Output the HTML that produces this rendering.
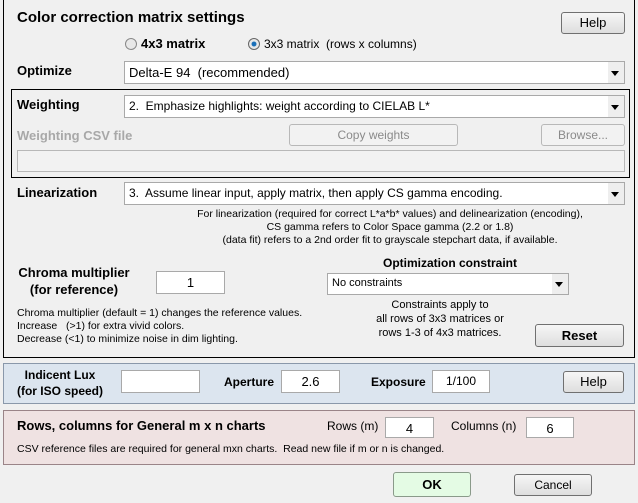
<!DOCTYPE html>
<html><head><style>
*{box-sizing:border-box;margin:0;padding:0}
body{width:638px;height:503px;background:#f0f0f0;font-family:"Liberation Sans",Arial,sans-serif;font-size:12px;color:#000;position:relative;overflow:hidden}
.a{position:absolute;white-space:nowrap}
.b{font-weight:bold}
.btn{position:absolute;border:1px solid #707070;border-radius:3px;background:linear-gradient(#f6f6f6,#dedede);text-align:center;font-size:13px}
.dis{border-color:#b8b8b8;color:#8a8a8a;background:#f2f2f2;font-size:12px}
.sel{position:absolute;background:#fff;border:1px solid #a9a9a9;font-size:12px;padding:3px 4px}
.sel:after{content:"";position:absolute;right:5px;top:50%;margin-top:-2px;border-left:4px solid transparent;border-right:4px solid transparent;border-top:5px solid #000}
.sel i{position:absolute;right:0;top:0;bottom:0;width:16px;background:#eee}
.in{position:absolute;background:#fff;border:1px solid #a9a9a9;text-align:center;font-size:13px}
.c{text-align:center}
.sm{font-size:11px}
</style></head><body>
<div class="a" style="left:3px;top:0;width:632px;height:358px;border:1px solid #000;border-top:none"></div>
<div class="a b" style="left:17px;top:9px;font-size:15px">Color correction matrix settings</div>
<div class="btn" style="left:561px;top:12px;width:64px;height:22px;line-height:20px">Help</div>
<div class="a" style="left:125px;top:38px;width:12px;height:12px;border-radius:50%;border:1px solid #888;background:#e8e8e8"></div>
<div class="a b" style="left:141px;top:36px;font-size:13px">4x3 matrix</div>
<div class="a" style="left:248px;top:38px;width:12px;height:12px;border-radius:50%;border:1px solid #666;background:radial-gradient(#1a6fb8 30%,#e8e8e8 40%)"></div>
<div class="a" style="left:264px;top:37px;font-size:12px">3x3 matrix&nbsp; (rows x columns)</div>
<div class="a b" style="left:17px;top:63px;font-size:13px">Optimize</div>
<div class="sel" style="left:124px;top:61px;width:501px;height:23px;font-size:13px"><i></i>Delta-E 94&nbsp; (recommended)</div>
<div class="a" style="left:11px;top:89px;width:619px;height:89px;border:1px solid #000"></div>
<div class="a b" style="left:17px;top:97px;font-size:13px">Weighting</div>
<div class="sel" style="left:124px;top:95px;width:501px;height:23px"><i></i>2.&nbsp; Emphasize highlights: weight according to CIELAB L*</div>
<div class="a b" style="left:17px;top:128px;font-size:13px;color:#a8a8a8">Weighting CSV file</div>
<div class="btn dis" style="left:289px;top:124px;width:169px;height:22px;line-height:20px">Copy weights</div>
<div class="btn dis" style="left:541px;top:124px;width:84px;height:22px;line-height:20px">Browse...</div>
<div class="a" style="left:17px;top:150px;width:608px;height:22px;border:1px solid #b8b8b8;background:#f2f2f2"></div>
<div class="a b" style="left:17px;top:185px;font-size:13px">Linearization</div>
<div class="sel" style="left:124px;top:182px;width:501px;height:23px"><i></i>3.&nbsp; Assume linear input, apply matrix, then apply CS gamma encoding.</div>
<div class="a c" style="left:160px;width:460px;top:208px;line-height:13px;font-size:10.5px">For linearization (required for correct L*a*b* values) and delinearization (encoding),<br>CS gamma refers to Color Space gamma (2.2 or 1.8)<br>(data fit) refers to a 2nd order fit to grayscale stepchart data, if available.</div>
<div class="a b c" style="left:340px;width:220px;top:256px;font-size:12px">Optimization constraint</div>
<div class="a b c" style="left:10px;width:128px;top:264px;font-size:13px;line-height:17px">Chroma multiplier<br>(for reference)</div>
<div class="in" style="left:156px;top:271px;width:69px;height:23px;line-height:21px">1</div>
<div class="sel" style="left:327px;top:273px;width:242px;height:22px;font-size:11px"><i></i>No constraints</div>
<div class="a" style="left:17px;top:307px;line-height:13px;font-size:10.5px">Chroma multiplier (default = 1) changes the reference values.<br>Increase &nbsp;&nbsp;(&gt;1) for extra vivid colors.<br>Decrease (&lt;1) to minimize noise in dim lighting.</div>
<div class="a c sm" style="left:360px;width:160px;top:298px;line-height:14px">Constraints apply to<br>all rows of 3x3 matrices or<br>rows 1-3 of 4x3 matrices.</div>
<div class="btn b" style="left:535px;top:324px;width:89px;height:23px;line-height:21px">Reset</div>
<div class="a" style="left:3px;top:363px;width:632px;height:41px;border:1px solid #8a98aa;background:#dce5ef"></div>
<div class="a b c" style="left:8px;width:104px;top:367px;font-size:12px;line-height:16px">Indicent Lux<br>(for ISO speed)</div>
<div class="in" style="left:121px;top:370px;width:79px;height:23px"></div>
<div class="a b" style="left:224px;top:375px;font-size:12px">Aperture</div>
<div class="in" style="left:281px;top:370px;width:59px;height:23px;line-height:21px">2.6</div>
<div class="a b" style="left:371px;top:375px;font-size:12px">Exposure</div>
<div class="in" style="left:432px;top:370px;width:58px;height:23px;line-height:21px;font-size:12px">1/100</div>
<div class="btn" style="left:563px;top:371px;width:61px;height:22px;line-height:20px">Help</div>
<div class="a" style="left:3px;top:410px;width:632px;height:55px;border:1px solid #9a8488;background:#efe2e2"></div>
<div class="a b" style="left:17px;top:418px;font-size:13px">Rows, columns for General m x n charts</div>
<div class="a" style="left:327px;top:419px;font-size:12px">Rows (m)</div>
<div class="in" style="left:385px;top:417px;width:49px;height:21px;line-height:22px">4</div>
<div class="a" style="left:451px;top:419px;font-size:12px">Columns (n)</div>
<div class="in" style="left:526px;top:417px;width:48px;height:21px;line-height:22px">6</div>
<div class="a" style="left:17px;top:443px;font-size:10.5px">CSV reference files are required for general mxn charts.&nbsp; Read new file if m or n is changed.</div>
<div class="btn b" style="left:393px;top:472px;width:78px;height:25px;line-height:23px;background:#e4fbe4;border-color:#8a9a8a">OK</div>
<div class="btn" style="left:514px;top:474px;width:78px;height:22px;line-height:20px;font-size:12px">Cancel</div>
</body></html>
